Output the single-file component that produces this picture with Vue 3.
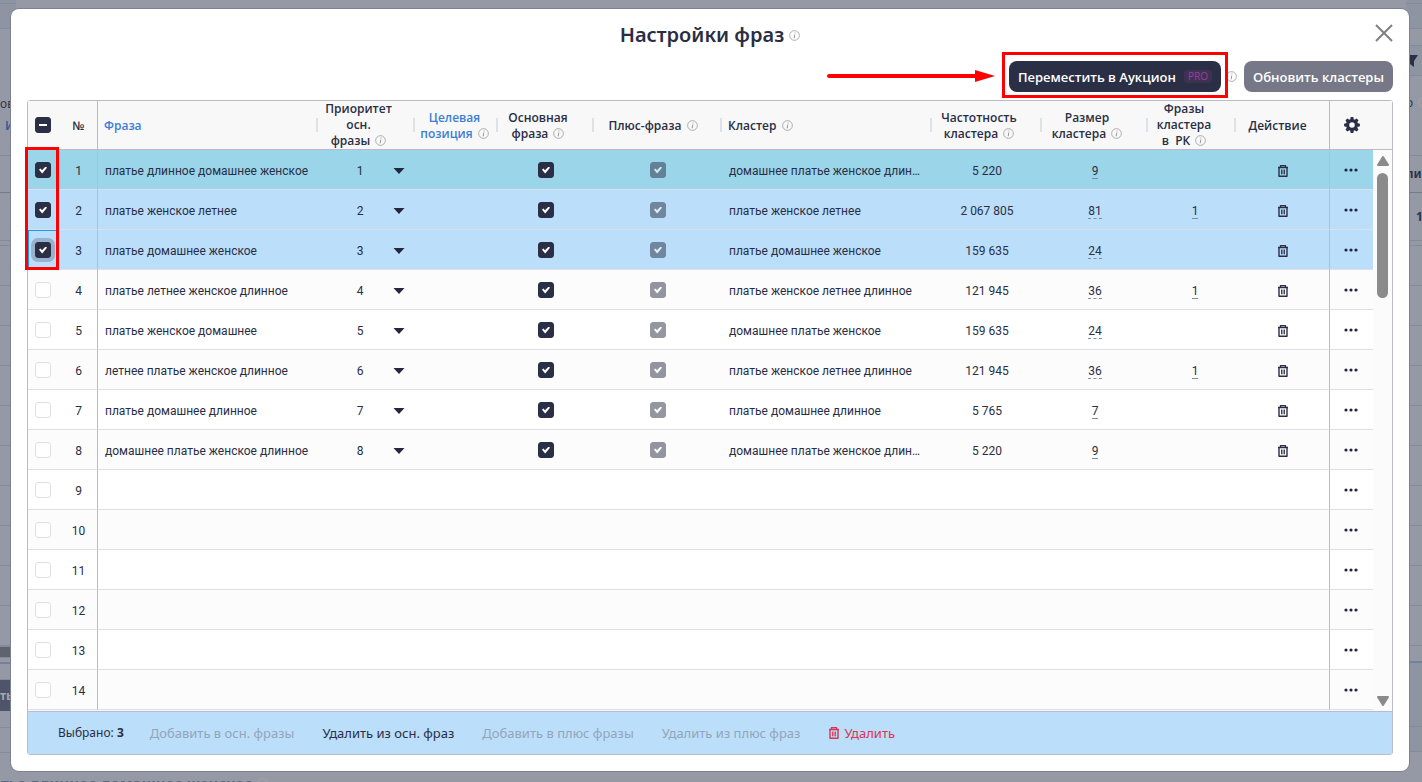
<script setup>
import { h } from 'vue'

const rows = [
  { phrase: 'платье длинное домашнее женское', cluster: 'домашнее платье женское длинное', freq: '5 220', size: 9, rk: '', state: 'hover' },
  { phrase: 'платье женское летнее', cluster: 'платье женское летнее', freq: '2 067 805', size: 81, rk: 1, state: 'selected' },
  { phrase: 'платье домашнее женское', cluster: 'платье домашнее женское', freq: '159 635', size: 24, rk: '', state: 'selected focused' },
  { phrase: 'платье летнее женское длинное', cluster: 'платье женское летнее длинное', freq: '121 945', size: 36, rk: 1 },
  { phrase: 'платье женское домашнее', cluster: 'домашнее платье женское', freq: '159 635', size: 24, rk: '' },
  { phrase: 'летнее платье женское длинное', cluster: 'платье женское летнее длинное', freq: '121 945', size: 36, rk: 1 },
  { phrase: 'платье домашнее длинное', cluster: 'платье домашнее длинное', freq: '5 765', size: 7, rk: '' },
  { phrase: 'домашнее платье женское длинное', cluster: 'домашнее платье женское длинное', freq: '5 220', size: 9, rk: '' },
  {}, {}, {}, {}, {}, {}
]

const middle = Array.from({ length: 9 }, () => ({ h: 40 }))
const leftStrip = [
  { h: 4, tone: 'dark' }, { h: 25, tone: 'dark' }, { h: 127, text: 'ов', link: 'И' }, { h: 37, tone: 'strong' },
  { h: 48 }, { h: 5 }, { h: 40 }, ...middle, { h: 1 }, { h: 11, tone: 'bar' }, { h: 6, tone: 'blue' },
  { h: 16 }, { h: 31, tone: 'button', text: 'ть' }, { h: 17 }, { h: 25 }, { h: 31 }
]
const rightStrip = [
  { h: 4, tone: 'dark' }, { h: 25, tone: 'dark' }, { h: 17 }, { h: 30, tone: 'dark', filter: true }, { h: 80, text: 'о', info: true },
  { h: 37, tone: 'strong', text: 'лин', bold: true }, { h: 48, text: '1', bold: true }, { h: 5 }, { h: 40 }, ...middle,
  { h: 17, tone: 'blue' }, { h: 64, tone: 'dark' }, { h: 25, tone: 'dark' }, { h: 31 }
]

const InfoIcon = () => h('svg', { class: 'info', viewBox: '0 0 12 12', width: 11, height: 11, 'aria-hidden': 'true' }, [
  h('circle', { cx: 6, cy: 6, r: 5.3, fill: 'none', stroke: '#a6a6a6', 'stroke-width': 1 }),
  h('path', { d: 'M6.3 4.9 5.7 9M6.5 2.8 6.4 3.7', fill: 'none', stroke: '#999', 'stroke-width': 1.1 })
])
const TrashIcon = () => h('svg', { viewBox: '0 0 12 14', width: 12, height: 14, 'aria-hidden': 'true' }, [
  h('path', { d: 'M1 3.5H11M3.5 3.3V1.6H8.5V3.3M2 3.5V12.2H10V3.5', fill: 'none', stroke: 'currentColor', 'stroke-width': 1.4, 'stroke-linejoin': 'round' }),
  h('path', { d: 'M4.5 5.5V10.3M6 5.5V10.3M7.5 5.5V10.3', fill: 'none', stroke: 'currentColor', 'stroke-width': 0.9 })
])
</script>

<template>
  <div class="page">
    <div class="backdrop" aria-hidden="true">
      <div class="strip">
        <div v-for="(s, i) in leftStrip" :key="i" class="seg" :class="s.tone" :style="{ height: s.h + 'px' }">
          <span v-if="s.text">{{ s.text }}</span>
          <span v-if="s.link" class="seg-link">{{ s.link }}</span>
        </div>
      </div>
      <div class="strip right">
        <div v-for="(s, i) in rightStrip" :key="i" class="seg" :class="[s.tone, { bold: s.bold }]" :style="{ height: s.h + 'px' }">
          <svg v-if="s.filter" viewBox="0 0 14 12" width="14" height="12"><path d="M0 0H12L8 6V12L4 9V6Z" fill="#2b3047" /></svg>
          <span v-if="s.text">{{ s.text }}</span>
          <InfoIcon v-if="s.info" />
        </div>
      </div>
      <div class="below">платье длинное домашнее женское <InfoIcon /></div>
    </div>

    <section class="modal" role="dialog" aria-labelledby="dialog-title">
      <header class="top">
        <h1 id="dialog-title">Настройки фраз</h1>
        <InfoIcon />
        <button class="close" aria-label="Закрыть">
          <svg viewBox="0 0 18 18" width="18" height="18"><path d="M1 1 17 17M17 1 1 17" stroke="#808080" stroke-width="2" fill="none" /></svg>
        </button>
      </header>

      <div class="toolbar">
        <div class="marked">
          <button class="btn">Переместить в Аукцион <span class="pro">PRO</span></button>
          <svg class="arrow" viewBox="0 0 168 12" width="168" height="12" aria-hidden="true">
            <path d="M2 6H150" stroke="#f00" stroke-width="4" stroke-linecap="round" />
            <path d="M148 0 168 6 148 12Z" fill="#f00" />
          </svg>
          <span class="frame"></span>
        </div>
        <InfoIcon />
        <button class="btn muted">Обновить кластеры</button>
      </div>

      <div class="grid">
        <div class="grid-main">
          <table>
            <colgroup>
              <col class="c-check"><col class="c-num"><col class="c-phrase"><col class="c-prio"><col class="c-target"><col class="c-main">
              <col class="c-plus"><col class="c-cluster"><col class="c-freq"><col class="c-size"><col class="c-rk"><col class="c-act"><col class="c-more">
            </colgroup>
            <thead>
              <tr>
                <th class="tick"><input type="checkbox" class="box partial" aria-label="Выбрать все"></th>
                <th class="num">№</th>
                <th class="left link sep">Фраза</th>
                <th class="sep tall">Приоритет<br>осн.<br>фразы <InfoIcon /></th>
                <th class="link sep target">Целевая<br>позиция <InfoIcon /></th>
                <th class="sep">Основная<br>фраза <InfoIcon /></th>
                <th class="sep wide">Плюс-фраза <InfoIcon /></th>
                <th class="left sep">Кластер <InfoIcon /></th>
                <th class="sep">Частотность<br>кластера <InfoIcon /></th>
                <th class="sep">Размер<br>кластера <InfoIcon /></th>
                <th class="sep tall">Фразы<br>кластера<br>в&nbsp; РК <InfoIcon /></th>
                <th class="wide">Действие</th>
                <th class="more">
                  <button class="icon" aria-label="Настройки таблицы">
                    <svg viewBox="-8 -8 16 16" width="16" height="16">
                      <circle r="4.4" fill="none" stroke="#2a2e45" stroke-width="3.2" />
                      <path v-for="a in 8" :key="a" d="M-1.9-5.2-1.3-7.9H1.3L1.9-5.2Z" fill="#2a2e45" :transform="`rotate(${a * 45})`" />
                    </svg>
                  </button>
                </th>
              </tr>
            </thead>
            <tbody>
              <tr v-for="(r, i) in rows" :key="i" :class="r.state">
                <td class="tick"><input type="checkbox" class="box" :checked="!!r.state" :aria-label="'Выбрать строку ' + (i + 1)"></td>
                <td class="num">{{ i + 1 }}</td>
                <td class="left">{{ r.phrase }}</td>
                <td class="prio">
                  <label v-if="r.phrase">
                    <select :aria-label="'Приоритет фразы ' + (i + 1)"><option>{{ i + 1 }}</option></select>
                    <svg viewBox="0 0 12 6" width="12" height="6"><path d="M.5 0H11.5L6 6Z" fill="#23273d" /></svg>
                  </label>
                </td>
                <td></td>
                <td class="tick"><input v-if="r.phrase" type="checkbox" class="box" checked aria-label="Основная фраза"></td>
                <td class="tick"><input v-if="r.phrase" type="checkbox" class="box" checked disabled aria-label="Плюс-фраза"></td>
                <td class="left">{{ r.cluster }}</td>
                <td>{{ r.freq }}</td>
                <td><a v-if="r.size" href="#">{{ r.size }}</a></td>
                <td class="rk"><a v-if="r.rk" href="#">{{ r.rk }}</a></td>
                <td><button v-if="r.phrase" class="icon" aria-label="Удалить"><TrashIcon /></button></td>
                <td class="more">
                  <button class="icon" aria-label="Ещё">
                    <svg viewBox="0 0 14 4" width="14" height="4"><circle cx="2" cy="2" r="1.6" /><circle cx="7" cy="2" r="1.6" /><circle cx="12" cy="2" r="1.6" /></svg>
                  </button>
                </td>
              </tr>
            </tbody>
          </table>
          <div class="scroll">
            <div class="scroll-head"></div>
            <div class="track">
              <svg viewBox="0 0 12 10" width="12" height="10"><path d="M6 1 11 9H1Z" fill="#8b8b8b" stroke="#8b8b8b" stroke-width="2" stroke-linejoin="round" /></svg>
              <div class="thumb"></div>
              <svg class="down" viewBox="0 0 12 10" width="12" height="10"><path d="M6 9 11 1H1Z" fill="#8b8b8b" stroke="#8b8b8b" stroke-width="2" stroke-linejoin="round" /></svg>
            </div>
          </div>
          <span class="frame rows-frame"></span>
        </div>
        <footer class="actions">
          <span class="count">Выбрано: <b>3</b></span>
          <button disabled>Добавить в осн. фразы</button>
          <button>Удалить из осн. фраз</button>
          <button disabled>Добавить в плюс фразы</button>
          <button disabled>Удалить из плюс фраз</button>
          <button class="danger"><TrashIcon />Удалить</button>
        </footer>
      </div>
    </section>
  </div>
</template>

<style>
body { background: #9599a6; }
</style>

<style scoped>
* { box-sizing: border-box; }
.page { position: relative; min-height: 100vh; overflow: hidden; padding: 9px 13px 11px 11px; color: #2a2e45; font-family: Roboto, "Liberation Sans", sans-serif; font-size: 12px; }
button { font: inherit; color: inherit; border: 0; padding: 0; background: none; cursor: pointer; }

.backdrop { position: absolute; inset: 0; display: flex; justify-content: space-between; overflow: hidden; font: 12px "Noto Sans", sans-serif; }
.strip { width: 16px; }
.seg { position: relative; flex: none; overflow: hidden; border-bottom: 1px solid #858a9a; display: flex; flex-direction: column; justify-content: center; line-height: 22px; color: #2f3448; white-space: nowrap; }
.strip:not(.right) .seg:nth-child(3) { justify-content: flex-end; padding-bottom: 18px; }
.seg.dark { background: #8f94a3; }
.seg.strong { border-color: #747a8e; }
.seg.blue { border-bottom: 2px solid #75809a; }
.seg.bar { background: #5f636d; }
.seg.button { background: #50546a; color: #a3a6b3; font-weight: 700; border: 0; }
.seg-link { padding-left: 5px; color: #3a5a9c; font-weight: 600; }
.right .seg { flex-direction: row; justify-content: flex-start; align-items: center; gap: 5px; }
.right .seg:nth-child(5) { padding-bottom: 26px; }
.bold { font-weight: 700; }
.right .bold + .bold { padding-left: 10px; }
.below { position: absolute; left: -27px; top: 773px; font-size: 15px; font-weight: 700; color: #5a6784; line-height: 20px; white-space: nowrap; }

.modal { position: relative; background: #fff; border-radius: 8px; box-shadow: 0 0 0 1px #7d8293; padding: 0 16px 16px; }
.top { display: flex; align-items: center; justify-content: center; gap: 5px; height: 52px; position: relative; }
h1 { margin: 0; font: 600 20px/28px "Noto Sans", sans-serif; }
.close { position: absolute; right: 0; top: 15px; height: 18px; display: flex; }
.toolbar { display: flex; justify-content: flex-end; align-items: center; gap: 5px; margin-bottom: 8px; }
.marked { position: relative; }
.btn { display: flex; align-items: center; gap: 8px; height: 31px; padding: 0 9px; border-radius: 8px; background: #2b2f45; color: #fff; font: 600 13px/20px "Open Sans", sans-serif; white-space: nowrap; }
.muted { background: #777887; margin-left: 2px; }
.pro { padding: 0 4px; line-height: 13px; border-radius: 3px; background: #3e3152; color: #9c3fa0; font-size: 10px; font-weight: 400; }
.frame { position: absolute; inset: -9px -7px -6px; border: 3px solid #f00; pointer-events: none; }
.arrow { position: absolute; right: calc(100% + 14px); top: 9px; }
.info { flex: none; }

.grid { border: 1px solid #b9bcc8; border-radius: 3px; }
.grid-main { position: relative; display: flex; background: #f8f8f8; padding-bottom: 1px; }
table { flex: 1; width: 0; table-layout: fixed; border-collapse: separate; border-spacing: 0; }
.c-check { width: 30px; } .c-num { width: 40px; } .c-prio { width: 97px; } .c-target { width: 83px; } .c-main { width: 96px; }
.c-plus { width: 128px; } .c-cluster { width: 210px; } .c-freq { width: 110px; } .c-size { width: 106px; } .c-rk { width: 88px; }
.c-act { width: 93px; } .c-more { width: 44px; }
th { position: relative; height: 49px; padding: 2px 16px 0 0; font: 600 12px/16px "Open Sans", sans-serif; text-align: center; vertical-align: middle; white-space: nowrap; border-bottom: 1px solid #b9bcc8; }
th.tall { padding-top: 0; }
th.wide { padding-right: 10px; }
th.target { padding-right: 4px; }
th .info { vertical-align: -1px; margin-left: 2px; }
th.num, td.num { padding-left: 2px; padding-right: 0; }
th.left { padding-left: 6px; }
.link { color: #3b7ed3; }
.num { border-right: 1px solid #b9bcc8; }
.more { border-left: 1px solid #b9bcc8; }
th.more { padding: 0; }
.sep::after { content: ""; position: absolute; right: 0; top: 17px; width: 2px; height: 14px; background: #dde1ea; }
td { height: 40px; padding: 2px 0 0; line-height: 16px; text-align: center; vertical-align: middle; border-bottom-width: 1px; border-bottom-style: solid; border-bottom-color: #dddfea; background: #fff; overflow: hidden; white-space: nowrap; }
tr:nth-child(even) td { background: #fcfcfc; }
tr.selected td { background: #bbdefb; }
tr.hover td { background: #9ad5e9; }
td.left { padding: 2px 8px 0 7px; text-align: left; text-overflow: ellipsis; }
.left { text-align: left; }
td.rk { padding-left: 6px; }
td.more { padding: 0 2px 0 0; }
th.tick, td.tick { padding: 0; }
a { color: inherit; text-decoration: none; border-bottom: 1px dashed #7d8ca5; }
.focused td:first-child { box-shadow: inset 1px 1px #2196f3; }

.box { appearance: none; display: block; width: 16px; height: 16px; margin: 0 auto; border: 1px solid #dddfe8; border-radius: 3px; background: #fff; }
.tick:first-child .box { margin-left: 7px; }
.box:checked, .partial { background: #2b2f45; border-color: #2b2f45; }
.box:checked::before { content: ""; display: block; width: 8px; height: 7px; margin: 4px 3px; background: #fff; clip-path: polygon(0 48%, 17% 28%, 38% 54%, 83% 0, 100% 18%, 40% 100%); }
.partial::before { content: ""; display: block; width: 8px; height: 2px; margin: 6px 3px; background: #fff; }
.box:disabled { opacity: .5; }
.focused td:first-child .box { box-shadow: 0 0 0 4px rgba(43, 47, 69, .25); }
.prio label { display: flex; align-items: center; padding-left: 13px; }
select { appearance: none; width: 58px; padding: 0; border: 0; background: none; font: inherit; color: inherit; text-align: center; text-align-last: center; }
.prio svg { margin-left: 4px; }
.icon { display: inline-flex; vertical-align: middle; fill: #1f2440; }

.scroll { width: 19px; display: flex; flex-direction: column; }
.scroll-head { height: 49px; border-bottom: 1px solid #b9bcc8; }
.track { flex: 1; display: flex; flex-direction: column; align-items: center; padding: 6px 0 4px; background: #fbfbfb; }
.thumb { width: 11px; height: 125px; margin-top: 7px; border-radius: 6px; background: #8b8b8b; }
.down { margin-top: auto; }
.rows-frame { inset: 46px auto auto -3px; width: 34px; height: 123px; }

.actions { display: flex; align-items: center; height: 43px; padding-left: 30px; gap: 28px; border-top: 1px solid #b9bcc8; background: #bbdefb; font: 13px/18px "Noto Sans", sans-serif; }
.count { margin-right: -2px; font-size: 12px; }
.actions button:disabled { color: #93a5b8; cursor: default; }
.actions .danger { display: flex; align-items: center; gap: 4px; color: #dc3350; }
</style>
